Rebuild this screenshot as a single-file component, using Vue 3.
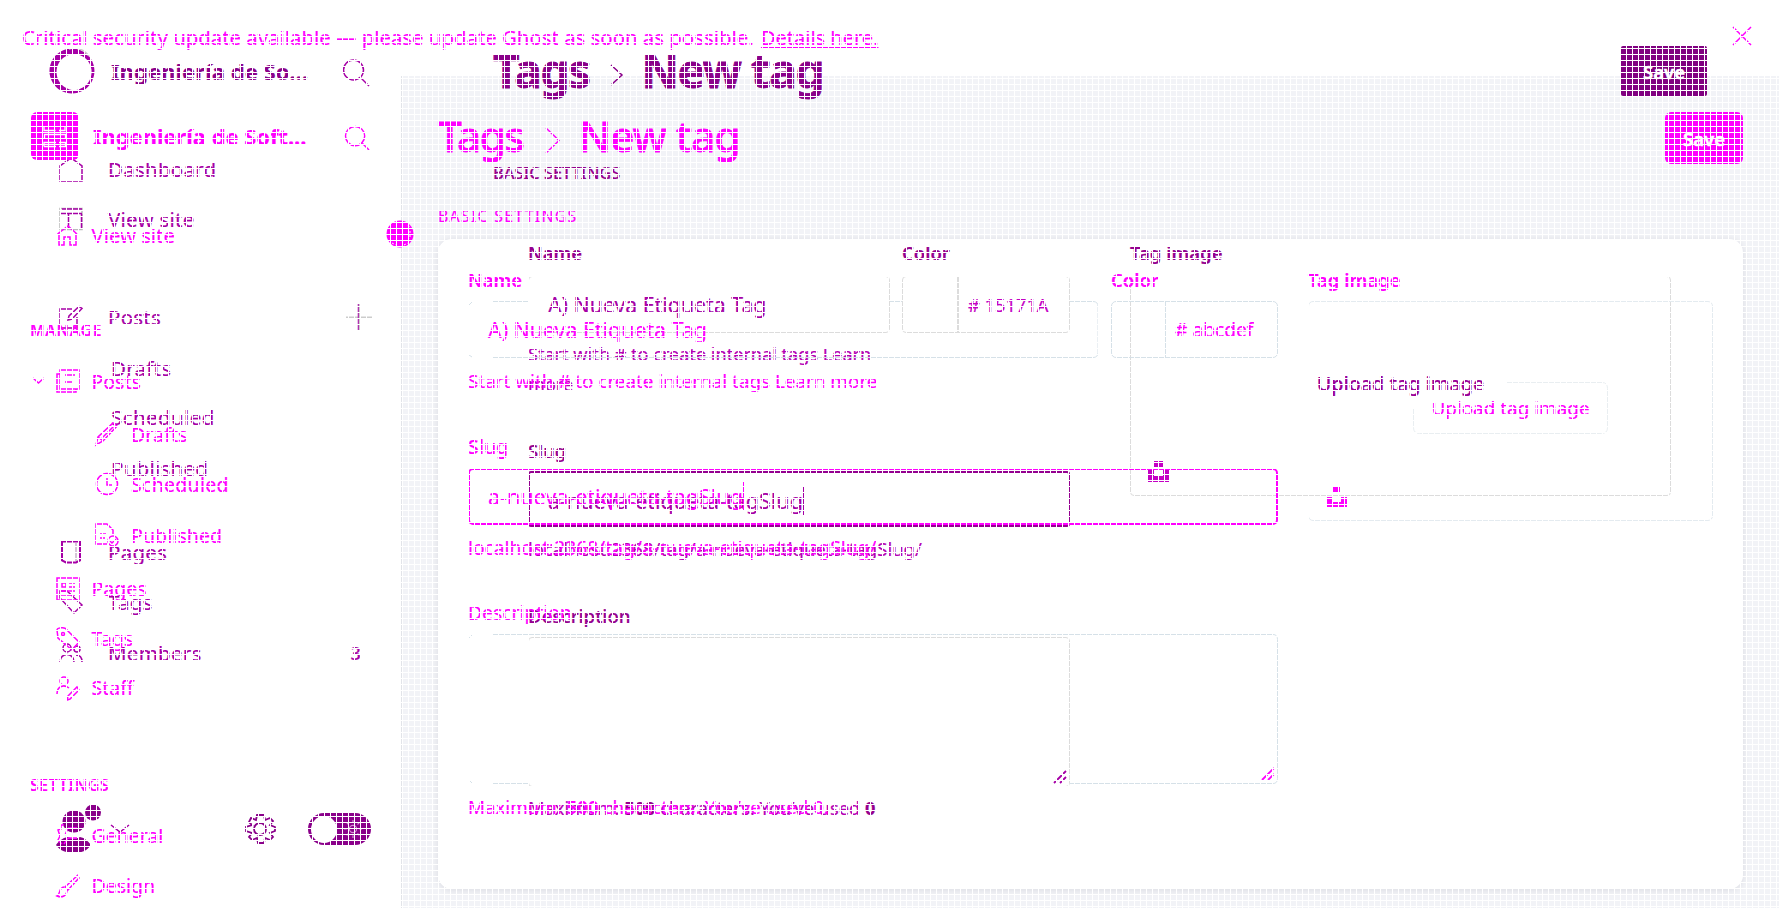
<script setup>
const icons = {
  home: '<path d="M1 24V9L12 1l11 8v15z"/>',
  layout: '<path d="M1 1.5h22v21H1z" stroke="#bbb"/><path d="M3 2h20M2 6.500h21M9.500 7v15M22.500 7v15"/>',
  edit: '<path d="M13 4H1v19h17V12M9 15l1-4L20 1.500l3 2L13 14z"/>',
  page: '<path d="M3 1.500h18v19l-4 2H7l-4-2z" stroke-width="2"/><path d="M17 3v18" stroke="#c9b0c9"/>',
  diamond: '<path d="M1 8V1h7l15 14-8 8z"/>',
  members: '<circle cx="8" cy="7" r="4"/><circle cx="18" cy="8" r="3"/><path d="M1 21c0-10 14-10 14 0M17 14c4 0 6 3 6 7"/>',
  house: '<path d="M1.500 11 12 3l9 8M3 10v12h5v-8h6v8h6V10"/>',
  posts: '<path d="M4 1h19v19H4zM4 5H1v18h19v-3M9 6h10M9 13h8"/>',
  pencil: '<path d="M1 23l2-8L18 1l4 3L8 19zM7 16 19 4M3 15l5 4"/>',
  clock: '<circle cx="12" cy="12" r="10.500"/><path d="M12 6v7h5"/>',
  published: '<path d="M12 21H1V1h11l6 6v4M5 11h6M5 15h5"/><circle cx="18" cy="18" r="5"/><path d="m15 18 2 2 4-4"/>',
  pages: '<path d="M1 1h22v22H1zM6 6h4v4H6zM13 6h6M13 10h6M5 14h14M5 18h14"/>',
  tag: '<path d="M1 3c0-2 8-4 10 0l12 12-7 8L2 11z"/><circle cx="7" cy="7" r="1.500"/>',
  staff: '<circle cx="8" cy="5" r="4"/><path d="M1 18c0-8 7-10 12-6M12 20l9-9 2 3-9 9-3 1z"/>',
  general: '<path d="M8 1H5v4l-3 1 2 6-2 4 4 4M12 4h9M12 4l-3 7M12 14h9M12 14l-4 6"/>',
  design: '<path d="M22 1 9 13l3 3L23 4zM8 13c-6 1-3 7-7 9 5 2 10 0 10-6"/>',
}
const current = [
  { t: 'Dashboard', i: 'home', c: 'p-dash' },
  { t: 'View site', i: 'layout' },
  { t: 'Posts', i: 'edit', c: 'p-posts', plus: true },
  { t: 'Drafts', c: 'sub p-draft' },
  { t: 'Scheduled', c: 'sub p-sched' },
  { t: 'Published', c: 'sub p-draft' },
  { t: 'Pages', i: 'page', c: 'p-pages' },
  { t: 'Tags', i: 'diamond' },
  { t: 'Members', i: 'members', c: 'p-draft', n: '3' },
]
const previous = [
  { t: 'View site', i: 'house', c: 'm-view' },
  { t: 'Manage', c: 'group m-manage' },
  { t: 'Posts', i: 'posts', c: 'm-posts', open: true },
  { t: 'Drafts', i: 'pencil', c: 'sub m-drafts' },
  { t: 'Scheduled', i: 'clock', c: 'sub m-sched' },
  { t: 'Published', i: 'published', c: 'sub m-pub' },
  { t: 'Pages', i: 'pages', c: 'm-pages' },
  { t: 'Tags', i: 'tag' },
  { t: 'Staff', i: 'staff', c: 'm-staff' },
  { t: 'Settings', c: 'group m-settings' },
  { t: 'General', i: 'general', c: 'm-general' },
  { t: 'Design', i: 'design' },
]
</script>

<template>
  <div class="screen">
    <div class="canvas">
      <div class="backdrop"><div class="sheet"></div></div>
    </div>

    <div class="layer purple">
      <aside class="side">
        <header class="brand">
          <svg class="logo" viewBox="0 0 46 46"><path fill-rule="evenodd" fill="#a600a6" d="M23 .5A22.500 22.500 0 1 1 22.900 .5zM25 6A17.500 18 0 1 0 25.100 6z"/><path d="M20 1c7-3 16 1 20 7" fill="none" stroke="#ccc" stroke-width="1.500"/></svg>
          <b>Ingeniería de So...</b>
          <svg class="search" viewBox="0 0 26 27"><circle cx="10.500" cy="11" r="10"/><path d="m18 19 8 8"/></svg>
        </header>
        <nav>
          <div v-for="n in current" :key="n.t" class="row" :class="n.c">
            <svg v-if="n.i" class="ico" viewBox="0 0 24 24" v-html="icons[n.i]"></svg>
            <span>{{ n.t }}</span>
            <svg v-if="n.plus" class="plus" viewBox="0 0 26 27"><path d="M0 13.500h26" stroke="#ccc" stroke-width="2"/><path d="M12.500 0v27"/><path d="M13.500 0v27" stroke="#ccc"/></svg>
            <em v-if="n.n">{{ n.n }}</em>
          </div>
        </nav>
        <footer class="foot">
          <svg class="avatar" viewBox="0 0 46 50"><ellipse cx="18" cy="17.500" rx="11.500" ry="11"/><circle cx="37" cy="8.500" r="8"/><path d="M0 41c3-4 6-7 12-8 4 2 8 2 12 0 5 1 8 4 11 8-4 6-10 8-17 8S4 47 0 41z"/></svg>
          <svg class="chev" viewBox="0 0 18 8"><path d="m0 0 9 7 9-7"/></svg>
          <svg class="gear" viewBox="0 0 30 30"><circle cx="15" cy="15" r="6"/><path d="m12 1-1 5-5-2-2 4 3 3-6 2v4l6 2-3 4 3 3 5-2 1 5h6l1-5 5 2 3-3-3-4 5-2v-4l-5-2 3-4-3-3-5 2-1-5z"/></svg>
          <div class="toggle"><i></i><svg viewBox="0 0 20 20"><circle cx="10" cy="10" r="4"/><path d="M10 0v3M10 17v3M0 10h3M17 10h3M3 3l2 2M15 15l2 2M3 17l2-2M15 5l2-2"/></svg></div>
        </footer>
      </aside>
      <main class="main">
        <div class="head">
          <h1><span>Tags</span><svg viewBox="0 0 12 22"><path d="m0 1 11 10L0 21"/></svg><span>New tag</span></h1>
          <button class="save">Save</button>
        </div>
        <div class="section">BASIC SETTINGS</div>
        <div class="form">
          <div class="left">
            <div class="pair">
              <div class="name"><label>Name</label><div class="field value">A) Nueva Etiqueta Tag</div>
                <p class="hint two">Start with # to create internal tags Learn<br>more</p></div>
              <div class="color"><label>Color</label><div class="field swatch"><span># 15171A</span></div></div>
            </div>
            <label class="slug-l">Slug</label>
            <div class="field slug">a-nueva-etiqueta-tagSlug<i class="caret"></i></div>
            <p class="hint url">localhost:2368/tag/a-nueva-etiqueta-tagSlug/</p>
            <label class="desc-l">Description</label>
            <div class="field area"><svg class="grip" viewBox="0 0 12 12"><path d="M0 12 12 0M6 12l6-6"/></svg></div>
            <p class="hint max">Maximum: <strong>500</strong> characters. You’ve used <strong>0</strong></p>
          </div>
          <div class="right"><label>Tag image</label>
            <div class="drop"><span>Upload tag image</span><svg class="splash" viewBox="0 0 21 21"><path d="M6 0h9v6H6zM0 9h6v6h9V9h6v12H0z"/></svg></div>
          </div>
        </div>
      </main>
    </div>

    <div class="layer magenta">
      <div class="banner"><span>Critical security update available — please update Ghost as soon as possible. <u>Details here.</u></span>
        <svg viewBox="0 0 18 18"><path d="m0 0 18 18M18 0 0 18"/></svg></div>
      <div class="body">
        <aside class="side">
          <header class="brand">
            <svg class="logo" viewBox="0 0 48 48"><rect width="48" height="48" rx="6" fill="#f0f"/><path d="M13 15v3.500h11.500M28 18.500h6V15M13.500 27v-4.500h21V27M13 34.500v-4h12M28 30.500h6.500v4H28M13 34.500h12" fill="none" stroke="#fff" stroke-width="1.300"/></svg>
            <b>Ingeniería de Soft...</b>
            <svg class="search" viewBox="0 0 26 25"><circle cx="10.500" cy="10.500" r="10"/><path d="m18 18 7 7"/></svg>
          </header>
          <nav>
            <div v-for="n in previous" :key="n.t" class="row" :class="n.c">
              <svg v-if="n.open" class="open" viewBox="0 0 11 6"><path d="m0 0 5.500 5L11 0"/></svg>
              <svg v-if="n.i" class="ico" viewBox="0 0 24 24" v-html="icons[n.i]"></svg>
              <span>{{ n.t }}</span>
            </div>
          </nav>
          <svg class="badge" viewBox="0 0 28 28"><circle cx="14" cy="14" r="13.500"/><path d="m22 5 3 4M24 11v6l-3 5M6 23l4 2M18 25l4-2"/></svg>
        </aside>
        <main class="main">
          <div class="head">
            <h1><span>Tags</span><svg viewBox="0 0 14 25"><path d="m0 0 13 12.500L0 25"/></svg><span>New tag</span></h1>
            <button class="save">Save</button>
          </div>
          <div class="section">BASIC SETTINGS</div>
          <div class="form">
            <div class="left">
              <div class="pair">
                <div class="name"><label>Name</label>
                  <div class="value seg"><svg viewBox="0 0 631 57"><path d="M1 4l3-3M25 .5h35M422 .5h12M602 .5h23q5 0 5 5v46q0 5-5 5H25M1 54l3 2"/></svg>A) Nueva Etiqueta Tag</div></div>
                <div class="color"><label>Color</label><div class="field swatch"><span># abcdef</span></div></div>
              </div>
              <p class="hint start">Start with # to create internal tags Learn more</p>
              <label class="slug-l">Slug</label>
              <div class="field slug">a-nueva-etiqueta-tagSlug<i class="caret"></i></div>
              <p class="hint url">localhost:2368/tag/a-nueva-etiqueta-tagSlug/</p>
              <label class="desc-l">Description</label>
              <div class="area seg"><svg viewBox="0 0 810 150"><path d="M1 4l3-3M25 .5h780q4.500 0 4.500 5v139q0 5-4.500 5H602M60 149.500H25M1 146l3 3"/></svg><svg class="grip" viewBox="0 0 12 12"><path d="M0 12 12 0M6 12l6-6"/></svg></div>
              <p class="hint max">Maximum: <strong>500</strong> characters. You’ve used 0.</p>
            </div>
            <div class="right"><label>Tag image</label>
              <div class="drop"><svg class="btn-line" viewBox="0 0 195 52"><path d="M94 .5h95q5.500 0 5.500 6v39q0 6-6 6H6.500q-6 0-6-6V27"/></svg><span>Upload tag image</span><svg class="splash" viewBox="0 0 21 21"><path d="M6 0h7v5H6zM0 10h6v5h8v-5h6v10H0z"/></svg></div>
            </div>
          </div>
        </main>
      </div>
    </div>
    <div class="mesh"></div>
  </div>
</template>

<style>
html, body { margin: 0; overflow: hidden; background: #fff; }
</style>
<style scoped>
.screen { display: grid; width: 1779px; height: 908px; overflow: hidden; position: relative; background: #fff; font-family: "Noto Sans", sans-serif; -webkit-text-stroke: .2px; }
.screen * { box-sizing: border-box; }
.screen > * { grid-area: 1 / 1; min-width: 0; }
.canvas { padding: 76px 0 0 401px; height: 908px; }
.backdrop { height: 832px; padding: 163px 36px 19px 37px; background: #f2f3f7; border-left: 1px solid #e2e4e9; }
.sheet { height: 650px; margin-left: -1px; background: #fff; border-radius: 14px; box-shadow: 0 1px 7px rgba(20, 20, 40, .1); }
.mesh { z-index: 5; pointer-events: none; background: repeating-linear-gradient(90deg, #fff 0 1px, transparent 1px 6px), repeating-linear-gradient(180deg, #fff 0 1px, transparent 1px 6px); }

.layer { height: 908px; overflow: hidden; }
.purple { display: flex; color: #a600a6; --ink: #a600a6; z-index: 1; }
.magenta { color: #f0f; --ink: #f0f; z-index: 2; }
.body { display: flex; }
.side { width: 401px; flex: none; position: relative; }
.main { flex: 1; min-width: 0; }
svg { flex: none; display: block; }
.brand, .row, .head, .foot { display: flex; align-items: center; white-space: nowrap; }
.row { height: 50px; }
.ico, .search, .open, .chev, .gear, .plus, .grip, h1 svg, .banner svg { fill: none; stroke: var(--ink); stroke-width: 1.5; overflow: visible; }
.ico { width: 24px; height: 24px; }
h1, p { margin: 0; }
label, .section { display: block; height: 30px; line-height: 30px; white-space: nowrap; font-weight: 600; }
.hint { height: 30px; line-height: 30px; white-space: nowrap; }
strong { font-weight: 600; }
.pair, .form { display: flex; }
.field, .value { display: flex; align-items: center; white-space: nowrap; }
.caret { width: 1px; background: var(--ink); }
.drop, .area, .seg { position: relative; }
.grip { position: absolute; width: 12px; height: 12px; stroke-width: 1.8; }
.seg > svg:first-child, .btn-line { position: absolute; left: 0; top: 0; fill: none; stroke: #d6e1e8; }
.splash { position: absolute; width: 21px; height: 21px; fill: var(--ink); }
.save { border: 0; padding: 0; font: 600 18.5px "Noto Sans", sans-serif; color: #fff; background: var(--ink); -webkit-text-stroke: .5px; }
h1 { display: flex; align-items: center; line-height: 60px; white-space: nowrap; }

/* purple layer */
.purple .brand { height: 50px; margin-top: 46px; padding-left: 49px; color: #8a008a; font-size: 22.1px; }
.purple .logo { width: 46px; height: 46px; }
.purple .brand b { width: 230px; margin-left: 16px; padding-bottom: 1px; }
.purple .search { width: 26px; height: 27px; margin-left: 2px; margin-top: 2px; }
.purple .row { padding-left: 59px; font-size: 20.500px; letter-spacing: .25px; }
.purple .row .ico { margin-right: 25px; }
.purple .row.sub { padding-left: 111px; }
.purple .p-dash { margin-top: 48px; }
.p-posts { margin-top: 48px; }
.p-draft { margin-top: 1px; }
.p-sched { margin-top: -1px; }
.purple .row.p-sched { letter-spacing: .4px; }
.p-pages { margin-top: 34px; }
.plus { width: 26px; height: 27px; margin-left: auto; margin-right: 29px; }
em { font-style: normal; font-size: 18px; margin-left: auto; margin-right: 40px; font-weight: 500; }
.foot { height: 50px; margin-top: 126px; padding-left: 56px; }
.avatar { width: 46px; height: 50px; fill: #8a008a; }
.chev { width: 18px; height: 8px; margin-left: 9px; }
.gear { width: 30px; height: 30px; margin-left: 116px; stroke: #8a008a; stroke-width: 1.8; }
.toggle { display: flex; align-items: center; width: 63px; height: 32px; margin-left: 33px; padding: 3px; border-radius: 16px; background: #8a008a; }
.toggle i { width: 26px; height: 27px; border-radius: 50%; background: #fff; }
.toggle svg { width: 18px; height: 18px; margin-left: 7px; fill: none; stroke: #d78fd7; stroke-width: 1.3; }
.purple .main { padding-left: 92px; }
.purple .head { height: 60px; margin-top: 41px; }
.purple h1 { font-size: 46px; font-weight: 700; letter-spacing: -1.5px; color: #8a008a; padding-bottom: 2px; -webkit-text-stroke: .8px; }
.purple h1 svg { width: 12px; height: 22px; margin: 10px 19px 0 21px; stroke: #8a008a; }
.purple .save { width: 86px; height: 50px; margin-left: auto; margin-right: 72px; background: #800080; border-radius: 2px; }
.purple .section { margin-top: 57px; font-size: 16.400px; font-weight: 500; color: #96008e; }
.purple .form { padding-left: 35px; }
.purple .left { width: 542px; margin-right: 60px; padding-top: 50px; }
.purple label { font-size: 18.500px; color: #94008f; }
.purple .name { width: 362px; margin-right: 12px; }
.purple .color { width: 168px; }
.purple .field { border: 1px solid #dcdcdc; border-radius: 4px; height: 57px; margin-top: 8px; padding-left: 19px; font-size: 21.300px; }
.purple .swatch { font-size: 18.300px; color: #c400c4; background: linear-gradient(#dcdcdc, #dcdcdc) 54px 0 / 2px 100% no-repeat; padding-left: 65px; }
.purple .hint { font-size: 18.400px; color: #b400b4; }
.purple .two { height: 62px; line-height: 30px; margin-top: 6px; font-size: 18.100px; }
.purple .slug-l { margin-top: 35px; font-weight: 500; }
.purple .slug { height: 56px; margin-top: 5px; padding: 3px 0 0 18px; border: 2px solid #94008f; border-radius: 3px; font-size: 21.500px; }
.caret { height: 29px; }
.purple .url { margin-top: 7px; font-size: 18.500px; }
.purple .desc-l { margin-top: 37px; font-weight: 500; font-size: 18.700px; }
.purple .area { height: 150px; margin-top: 6px; }
.purple .grip { right: 3px; bottom: 3px; }
.purple .max { margin-top: 5.500px; font-size: 18.250px; }
.purple .max strong { font-weight: 700; color: #96008e; }
.purple .right { width: 541px; padding-top: 50px; }
.purple .drop { height: 220px; margin-top: 8px; border: 1px solid #dcdcdc; border-radius: 4px; text-align: center; line-height: 214px; font-size: 19.700px; font-weight: 500; color: #9a0098; }
.purple .splash { left: 17px; bottom: 13px; fill: #c400c4; }

/* magenta layer */
.banner { display: flex; justify-content: space-between; height: 76px; padding: 0 28px 0 22px; font-size: 20.370px; line-height: 74px; white-space: nowrap; }
.banner u { margin-left: 2px; font-size: 20px; text-decoration-thickness: 1px; text-underline-offset: 2px; text-decoration-skip-ink: none; }
.banner svg { width: 18px; height: 18px; margin-top: 27px; }
.magenta .brand { height: 50px; margin-top: 35px; padding-left: 31px; font-size: 21.900px; }
.magenta .logo { width: 48px; height: 48px; }
.magenta .brand b { width: 236px; margin-left: 14px; }
.magenta .search { width: 25px; height: 24px; margin-left: 16px; margin-top: 3px; }
.magenta .row { padding-left: 56px; font-size: 19.500px; position: relative; }
.magenta .row .ico { margin-right: 11.500px; }
.magenta .row.sub { padding-left: 95px; letter-spacing: .1px; }
.magenta .row.m-sched { letter-spacing: .3px; }
.magenta .row.sub .ico { margin-right: 12px; }
.magenta .row.m-view { margin-top: 49px; font-size: 20.300px; }
.magenta .row.group { padding-left: 30px; font-size: 15.700px; font-weight: 600; letter-spacing: .7px; text-transform: uppercase; }
.open { position: absolute; left: 33px; top: 22px; width: 11px; height: 6px; }
.m-manage { margin-top: 44.500px; }
.m-posts { margin-top: 1.500px; }
.m-drafts { margin-top: 3px; }
.m-pub { margin-top: 1px; }
.m-pages { margin-top: 3.500px; }
.m-staff { margin-top: -1px; }
.m-settings { margin-top: 47px; }
.m-general { margin-top: 1px; }
.badge { position: absolute; z-index: 3; left: 386px; top: 144px; width: 28px; height: 28px; fill: #f0f; }
.badge path { fill: none; stroke: #fff; stroke-dasharray: 2 2; }
.magenta .main { padding: 0 36px 0 37px; }
.magenta .head { height: 60px; margin-top: 32px; }
.magenta h1 { font-size: 42px; font-weight: 500; letter-spacing: -1.300px; padding-bottom: 4px; -webkit-text-stroke: .9px; }
.magenta h1 span:last-child { letter-spacing: -.8px; }
.magenta h1 svg { width: 14px; height: 25px; margin: 8px 19px 0 22px; }
.magenta .save { width: 78px; height: 52px; margin-left: auto; border-radius: 6px; }
.magenta .section { margin-top: 33px; font-size: 15.800px; font-weight: 400; letter-spacing: 1.300px; }
.magenta .form { margin-top: 8px; height: 650px; padding: 26px 30px 0; }
.magenta .left { width: 810px; margin-right: 30px; }
.magenta label { font-size: 18.500px; }
.magenta .name { width: 630px; margin-right: 13px; }
.magenta .color { width: 167px; }
.magenta .value { height: 57px; margin-top: 6px; padding-left: 20px; font-size: 21.350px; }
.magenta .name .seg > svg:first-child { width: 631px; height: 57px; }
.magenta .swatch { height: 57px; margin-top: 6px; border: 1px solid #d6e1e8; border-radius: 5px; padding-left: 63px; font-size: 19.200px; background: linear-gradient(#d6e1e8, #d6e1e8) 53px 0 / 1px 100% no-repeat; }
.magenta .start { margin-top: 8px; font-size: 18.850px; }
.magenta .slug-l { margin-top: 36px; font-weight: 500; font-size: 19.400px; }
.magenta .slug { height: 57px; margin-top: 6px; border: 2px solid #f0f; border-radius: 5px; padding: 0 0 1px 18px; font-size: 21.500px; }
.magenta .url { margin-top: 8px; font-size: 19.200px; }
.magenta .desc-l { margin-top: 35px; font-weight: 400; font-size: 19.300px; }
.magenta .area { height: 150px; margin-top: 6.400px; }
.area.seg > svg:first-child { width: 810px; height: 150px; }
.magenta .grip { right: 4px; bottom: 4px; }
.magenta .max { margin-top: 8px; font-size: 18.700px; }
.magenta .right { width: 406px; }
.magenta .drop { height: 220px; margin-top: 6px; border: 1px solid #e4ebf0; border-radius: 5px; text-align: center; line-height: 212px; font-size: 18.900px; }
.btn-line { width: 195px; height: 52px; left: 104px; top: 80px; stroke: #e9eef1; }
.magenta .splash { left: 18px; bottom: 12px; }
</style>
